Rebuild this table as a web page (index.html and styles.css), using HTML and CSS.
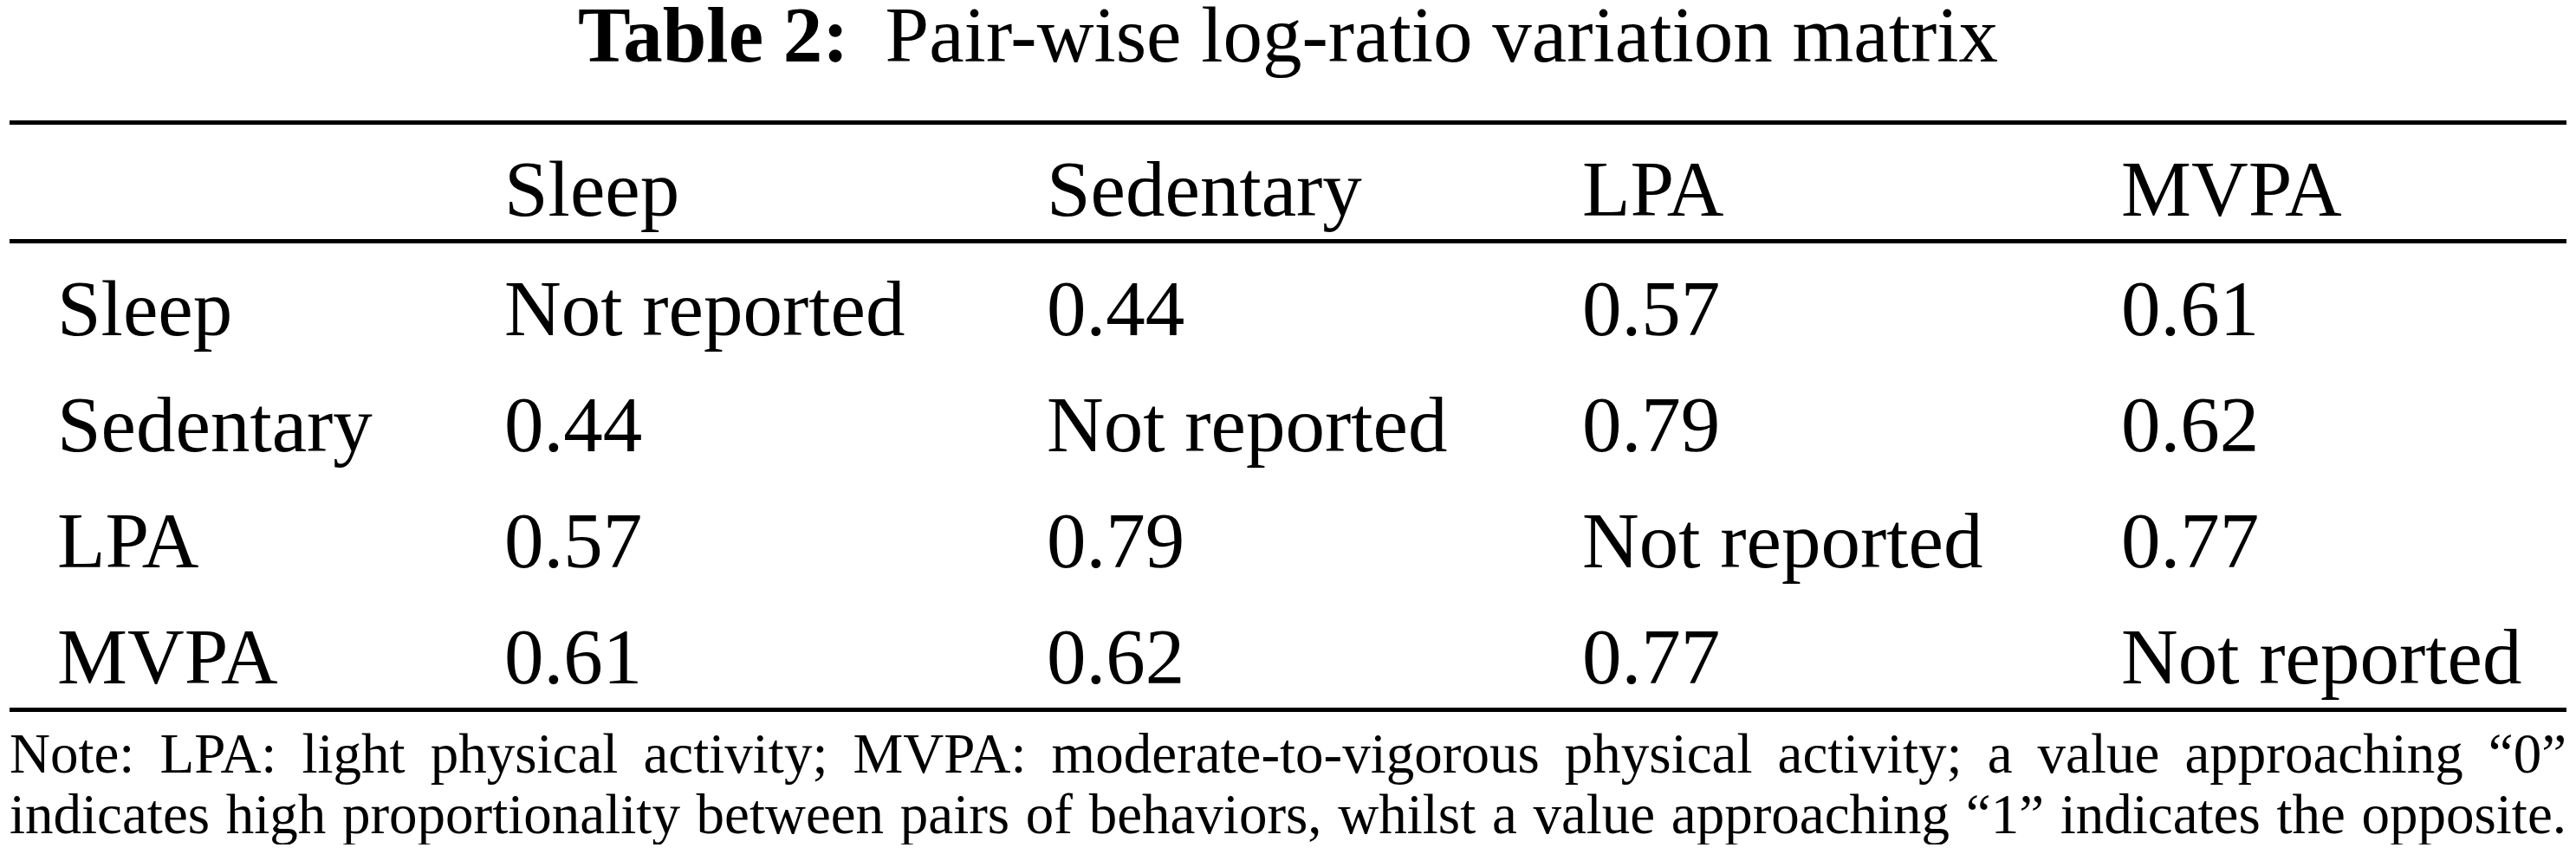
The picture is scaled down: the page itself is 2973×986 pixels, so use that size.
FILE: index.html
```html
<!DOCTYPE html>
<html lang="en">
<head>
<meta charset="utf-8">
<title>Table 2: Pair-wise log-ratio variation matrix</title>
<link rel="stylesheet" href="styles.css">
</head>
<body>
<div class="page">
  <h1 class="caption"><span class="label">Table 2:</span>Pair-wise log-ratio variation matrix</h1>
  <div class="table">
    <div class="row head">
      <div class="cell first"></div>
      <div class="cell">Sleep</div>
      <div class="cell">Sedentary</div>
      <div class="cell">LPA</div>
      <div class="cell">MVPA</div>
    </div>
    <div class="body">
      <div class="row">
        <div class="cell first">Sleep</div>
        <div class="cell">Not reported</div>
        <div class="cell">0.44</div>
        <div class="cell">0.57</div>
        <div class="cell">0.61</div>
      </div>
      <div class="row">
        <div class="cell first">Sedentary</div>
        <div class="cell">0.44</div>
        <div class="cell">Not reported</div>
        <div class="cell">0.79</div>
        <div class="cell">0.62</div>
      </div>
      <div class="row">
        <div class="cell first">LPA</div>
        <div class="cell">0.57</div>
        <div class="cell">0.79</div>
        <div class="cell">Not reported</div>
        <div class="cell">0.77</div>
      </div>
      <div class="row">
        <div class="cell first">MVPA</div>
        <div class="cell">0.61</div>
        <div class="cell">0.62</div>
        <div class="cell">0.77</div>
        <div class="cell">Not reported</div>
      </div>
    </div>
  </div>
  <p class="note">Note: LPA: light physical activity; MVPA: moderate-to-vigorous physical activity; a value approaching “0”<br>indicates high proportionality between pairs of behaviors, whilst a value approaching “1” indicates the opposite.</p>
</div>
</body>
</html>
```
FILE: styles.css
```css
html, body {
  margin: 0;
  padding: 0;
  background: #ffffff;
}

body {
  font-family: "Liberation Serif", "Times New Roman", serif;
  color: #000000;
}

.page {
  width: 2951px;
  margin-left: 11px;
}

.caption {
  margin: 0 0 57px 0;
  font-size: 91px;
  font-weight: normal;
  line-height: 82px;
  text-align: center;
  white-space: nowrap;
}

.caption .label {
  font-weight: bold;
  margin-right: 42px;
}

.table {
  border-top: 5px solid #000;
  font-size: 91px;
}

.row {
  display: grid;
  grid-template-columns: 571px 626px 618px 622px 1fr;
}

.head {
  border-bottom: 5px solid #000;
}

.head .cell {
  padding-top: 17px;
  line-height: 115px;
}

.body {
  border-bottom: 5px solid #000;
}

.body .cell {
  padding-top: 18px;
  line-height: 116px;
}

.cell {
  white-space: nowrap;
}

.cell.first {
  padding-left: 55px;
}

.note {
  margin: 13px 0 0 0;
  font-size: 65px;
  line-height: 70px;
  text-align: justify;
  text-align-last: justify;
}
```
